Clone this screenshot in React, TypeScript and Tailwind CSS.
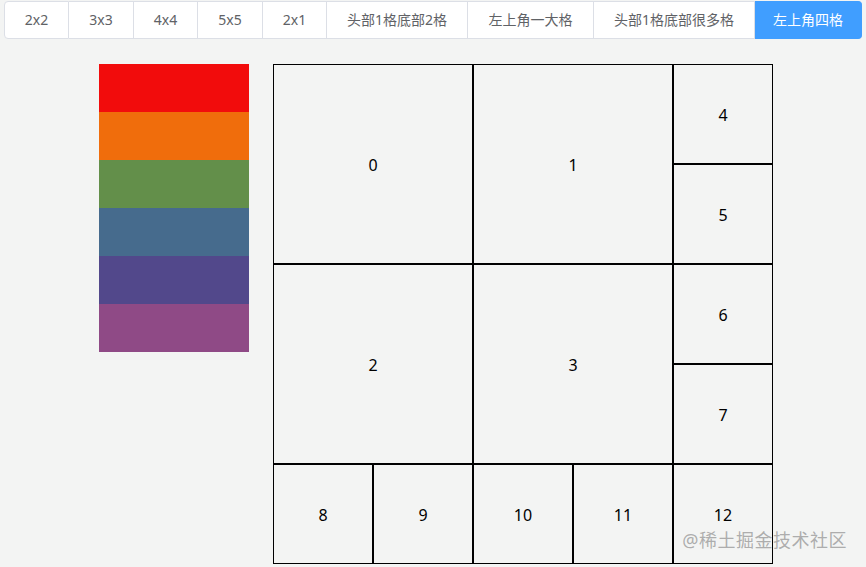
import React from "react";

const tabs = [
  { t: "2x2", w: "w-[65px]" },
  { t: "3x3", w: "w-[65px]" },
  { t: "4x4", w: "w-[64px]" },
  { t: "5x5", w: "w-[65px]" },
  { t: "2x1", w: "w-[64px]" },
  { t: "头部1格底部2格", w: "w-[141px]" },
  { t: "左上角一大格", w: "w-[126px]" },
  { t: "头部1格底部很多格", w: "w-[161px]" },
  { t: "左上角四格", w: "w-[107px]" },
];
const colors = ["#f20c0c", "#f06d0c", "#638f4a", "#466b8d", "#52488b", "#8f4a86"];

const cells: { n: number; cls: string }[] = [
  { n: 0, cls: "col-span-2 row-span-2" },
  { n: 1, cls: "col-span-2 row-span-2" },
  { n: 4, cls: "" },
  { n: 5, cls: "" },
  { n: 2, cls: "col-span-2 row-span-2" },
  { n: 3, cls: "col-span-2 row-span-2" },
  { n: 6, cls: "" },
  { n: 7, cls: "" },
  { n: 8, cls: "" },
  { n: 9, cls: "" },
  { n: 10, cls: "" },
  { n: 11, cls: "" },
  { n: 12, cls: "" },
];

export default function App() {
  return (
    <div
      className="relative w-[866px] h-[567px] overflow-hidden bg-[#f3f4f3]"
      style={{ fontFamily: '"Noto Sans", "Noto Sans CJK SC", sans-serif' }}
    >
      <div className="pt-px pl-[4px]">
        <div className="flex h-[38px] w-max">
          {tabs.map((tab, i) => {
            const active = i === tabs.length - 1;
            return (
              <div
                key={tab.t}
                className={
                  "flex items-center justify-center whitespace-nowrap text-[14px] leading-none border-y border-r " +
                  tab.w +
                  " " +
                  (i === 0 ? "border-l rounded-l-[4px] " : "") +
                  (active
                    ? "bg-[#409eff] border-[#409eff] text-white rounded-r-[4px] "
                    : "bg-white border-[#dcdfe6] text-[#606266] ")
                }
              >
                {tab.t}
              </div>
            );
          })}
        </div>
      </div>

      <div className="flex gap-[24px] pl-[99px] pt-[25px]">
        <div className="flex flex-col w-[150px]">
          {colors.map((c) => (
            <div key={c} className="h-[48px]" style={{ backgroundColor: c }} />
          ))}
        </div>
        <div className="grid grid-cols-[repeat(5,100px)] grid-rows-[repeat(5,100px)]">
          {cells.map((c) => (
            <div
              key={c.n}
              className={"flex items-center justify-center pt-[2px] border border-black text-[16px] text-black " + c.cls}
            >
              {c.n}
            </div>
          ))}
        </div>
      </div>

      <div className="absolute right-[19px] bottom-[18px] text-[18px] leading-none text-[#9a9a9a]/80 tracking-[0.5px]">
        @稀土掘金技术社区
      </div>
    </div>
  );
}
